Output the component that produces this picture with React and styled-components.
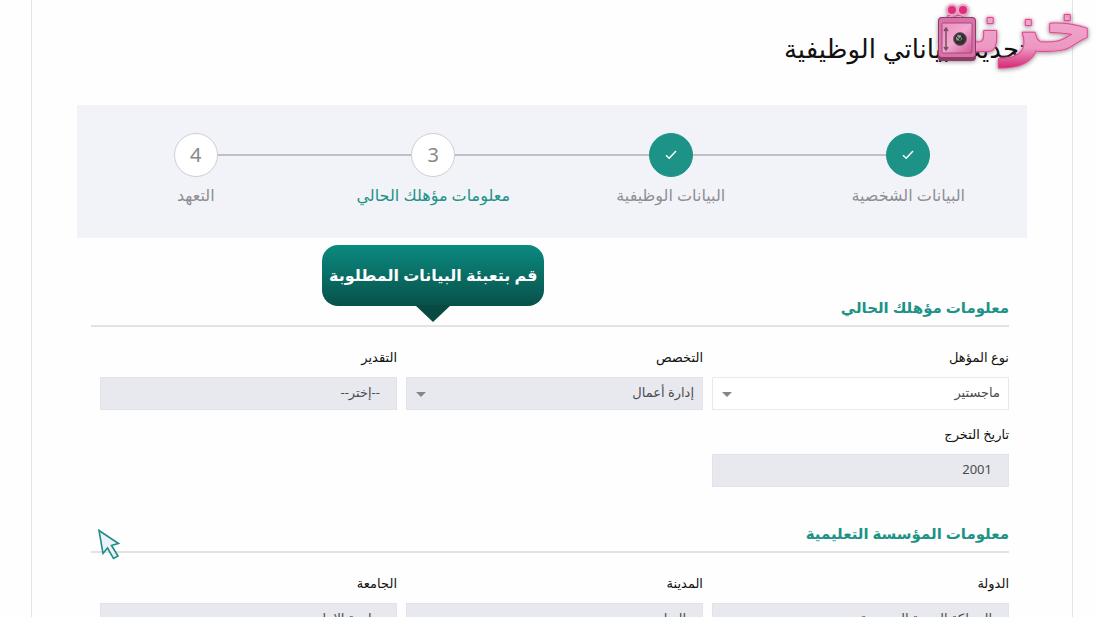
import React, { useState } from 'react';
import styled, { createGlobalStyle } from 'styled-components';

const steps = [
  { id: 1, label: 'البيانات الشخصية', done: true },
  { id: 2, label: 'البيانات الوظيفية', done: true },
  { id: 3, label: 'معلومات مؤهلك الحالي', active: true },
  { id: 4, label: 'التعهد' },
];

const sections = [
  {
    title: 'معلومات مؤهلك الحالي',
    fields: [
      { id: 'degree', label: 'نوع المؤهل', value: 'ماجستير', type: 'select' },
      { id: 'major', label: 'التخصص', value: 'إدارة أعمال', type: 'select', disabled: true },
      { id: 'grade', label: 'التقدير', value: '--إختر--', disabled: true },
      { id: 'graduation', label: 'تاريخ التخرج', value: '2001', disabled: true },
    ],
  },
  {
    title: 'معلومات المؤسسة التعليمية',
    fields: [
      { id: 'country', label: 'الدولة', value: 'المملكة العربية السعودية', disabled: true },
      { id: 'city', label: 'المدينة', value: 'الرياض', disabled: true },
      { id: 'university', label: 'الجامعة', value: 'جامعة الإمام سعود', disabled: true },
    ],
  },
];

const Field = ({ field }) => {
  const [value, setValue] = useState(field.value);

  return (
    <FieldWrapper>
      <FieldLabel htmlFor={field.id}>{field.label}</FieldLabel>
      {field.type === 'select' ? (
        <SelectBox>
          <Select
            id={field.id}
            value={value}
            disabled={field.disabled}
            onChange={(e) => setValue(e.target.value)}
          >
            <option value={field.value}>{field.value}</option>
          </Select>
          <Caret />
        </SelectBox>
      ) : (
        <Input
          id={field.id}
          value={value}
          disabled={field.disabled}
          onChange={(e) => setValue(e.target.value)}
        />
      )}
    </FieldWrapper>
  );
};

const Logo = () => (
  <LogoSvg width="160" height="68" viewBox="0 0 160 68" role="img" aria-label="خزنة">
    <defs>
      <linearGradient id="pink" x1="0" y1="0" x2="0" y2="1">
        <stop offset="0" stopColor="#d9327a" />
        <stop offset="0.4" stopColor="#f0a6cc" />
        <stop offset="0.75" stopColor="#ec98c2" />
        <stop offset="1" stopColor="#d42a74" />
      </linearGradient>
      <linearGradient id="safe" x1="0" y1="0" x2="1" y2="1">
        <stop offset="0" stopColor="#ee8fc0" />
        <stop offset="0.5" stopColor="#f3a9d0" />
        <stop offset="1" stopColor="#cf5c97" />
      </linearGradient>
    </defs>
    <LogoText x="157" y="51">خزنة</LogoText>
    <g fill="#d9327a" stroke="#f4a3c8" strokeWidth="2">
      <circle cx="16" cy="10" r="5" />
      <circle cx="27" cy="10" r="5" />
    </g>
    <rect x="2" y="17" width="38" height="44" rx="4" fill="#8f3c68" />
    <rect x="3" y="18" width="36" height="39" rx="3" fill="#d873a8" />
    <rect x="6" y="23" width="30" height="30" rx="1" fill="url(#safe)" stroke="#a84a7c" />
    <path d="M10 29v20M8 31l2-3 2 3M8 47l2 3 2-3" fill="none" stroke="#75515f" strokeWidth="1.5" />
    <circle cx="24" cy="39" r="6.5" fill="#333" stroke="#76616b" />
    <circle cx="23" cy="38" r="3" fill="#999" />
    <path d="M20 36l7 6M27 35l-6 8" stroke="#222" />
  </LogoSvg>
);

const App = () => {
  return (
    <>
      <GlobalStyle />
      <Page dir="rtl" lang="ar">
        <Card>
          <PageTitle>تحديث بياناتي الوظيفية</PageTitle>

          <Stepper>
            {steps.map((step) => (
              <Step key={step.id}>
                <StepCircle $done={step.done}>
                  {step.done ? (
                    <svg width="12" height="10" viewBox="0 0 12 10">
                      <path d="M1 5.2L4.2 8.2L11 1" fill="none" stroke="#fff" strokeWidth="1.5" />
                    </svg>
                  ) : (
                    step.id
                  )}
                </StepCircle>
                <StepLabel $active={step.active}>{step.label}</StepLabel>
                {step.active && <Tooltip role="tooltip">قم بتعبئة البيانات المطلوبة</Tooltip>}
              </Step>
            ))}
          </Stepper>

          {sections.map((section) => (
            <Section key={section.title}>
              <SectionTitle>{section.title}</SectionTitle>
              <FieldGrid>
                {section.fields.map((field) => (
                  <Field key={field.id} field={field} />
                ))}
              </FieldGrid>
            </Section>
          ))}
        </Card>
        <Logo />
        <Cursor width="24" height="32" viewBox="0 0 24 32" aria-hidden="true">
          <path
            d="M2 1.5L21.5 14.5L14.5 16.5L21 27L16.5 29.5L10.5 19L6 24.5Z"
            fill="#eef2f8"
            stroke="#1d8f86"
            strokeWidth="1.6"
          />
        </Cursor>
      </Page>
    </>
  );
};

const GlobalStyle = createGlobalStyle`
  html {
    scrollbar-width: none;
  }

  body {
    margin: 0;
    background: #fefefe;
  }

  * {
    box-sizing: border-box;
  }
`;

const Page = styled.main`
  position: relative;
  padding: 0 23px 0 31px;
  font-family: 'Noto Sans', 'DejaVu Sans', sans-serif;
`;

const Card = styled.div`
  padding: 28px 45px 24px;
  border: solid #e3e3e5;
  border-width: 0 1px;
`;

const PageTitle = styled.h1`
  margin: 0 0 37px;
  font-size: 26px;
  font-weight: 400;
  line-height: 40px;
  color: #111;
`;

const Stepper = styled.ol`
  display: grid;
  grid-template-columns: repeat(4, 1fr);
  height: 133px;
  margin: 0;
  padding: 28px 0 0;
  list-style: none;
  background: #f2f3f9;
`;

const Step = styled.li`
  position: relative;
  display: flex;
  flex-direction: column;
  align-items: center;

  &:not(:last-child)::before {
    content: '';
    position: absolute;
    top: 21px;
    right: 50%;
    width: 100%;
    height: 2px;
    background: #c0c1c6;
  }
`;

const StepCircle = styled.span`
  position: relative;
  z-index: 1;
  display: flex;
  align-items: center;
  justify-content: center;
  width: 44px;
  height: 44px;
  border: 1px solid ${(props) => (props.$done ? '#1d9287' : '#cfcfd3')};
  border-radius: 50%;
  background: ${(props) => (props.$done ? '#1d9287' : '#fff')};
  font-size: 20px;
  line-height: 24px;
  color: #888;
`;

const StepLabel = styled.span`
  margin-top: 6px;
  font-size: 16px;
  line-height: 24px;
  white-space: nowrap;
  color: ${(props) => (props.$active ? '#1d9287' : '#8e8e92')};
`;

const Tooltip = styled.div`
  position: absolute;
  top: 112px;
  left: 50%;
  z-index: 2;
  width: 222px;
  height: 61px;
  border-radius: 16px;
  background: linear-gradient(#0b8a80, #085149);
  transform: translateX(-50%);
  font-size: 16px;
  font-weight: 700;
  line-height: 61px;
  text-align: center;
  white-space: nowrap;
  color: #fff;

  &::after {
    content: '';
    position: absolute;
    top: 60px;
    left: 50%;
    border: solid transparent;
    border-width: 17px 18px 0;
    border-top-color: #084a42;
    transform: translateX(-50%);
  }
`;

const Section = styled.section`
  padding: 56px 18px 0 14px;

  & + & {
    padding-top: 33px;
  }
`;

const SectionTitle = styled.h2`
  margin: 0;
  padding-bottom: 5px;
  border-bottom: 2px solid #e3e3e5;
  font-size: 15px;
  font-weight: 700;
  line-height: 26px;
  color: #1d9287;
`;

const FieldGrid = styled.div`
  display: grid;
  grid-template-columns: repeat(3, 1fr);
  gap: 12px 9px;
  padding: 18px 0 0 9px;
`;

const FieldWrapper = styled.div`
  display: flex;
  flex-direction: column;
`;

const FieldLabel = styled.label`
  margin-bottom: 8px;
  font-size: 13px;
  line-height: 24px;
  color: #111;
`;

const SelectBox = styled.div`
  position: relative;
`;

const Input = styled.input`
  width: 100%;
  height: 33px;
  padding: 0 16px 3px;
  border: 1px solid ${(props) => (props.disabled ? '#e2e3e9' : '#e9e9eb')};
  border-radius: 0;
  background: ${(props) => (props.disabled ? '#e8e9ef' : '#fff')};
  font-family: inherit;
  font-size: 13px;
  color: #4c4c50;
  opacity: 1;
`;

const Select = styled(Input).attrs({ as: 'select' })`
  display: block;
  padding: 0 8px 3px;
  appearance: none;
`;

const Caret = styled.span`
  position: absolute;
  top: 15px;
  left: 10px;
  border: solid transparent;
  border-width: 5px 5px 0;
  border-top-color: #85868a;
  pointer-events: none;
`;

const LogoSvg = styled.svg`
  position: absolute;
  top: 0;
  right: 0;
  z-index: 3;
  overflow: visible;
  filter: drop-shadow(0 1px 2px rgba(0, 0, 0, 0.4));
`;

const LogoText = styled.text`
  font-family: 'DejaVu Sans', sans-serif;
  font-size: 68px;
  font-weight: 700;
  direction: rtl;
  fill: url(#pink);
  stroke: #de4a8d;
  stroke-width: 2px;
  stroke-linejoin: round;
  paint-order: stroke;
  filter: drop-shadow(0 0 1px #f58fc0);
`;

const Cursor = styled.svg`
  position: absolute;
  top: 529px;
  left: 97px;
  z-index: 3;
`;

export default App;
